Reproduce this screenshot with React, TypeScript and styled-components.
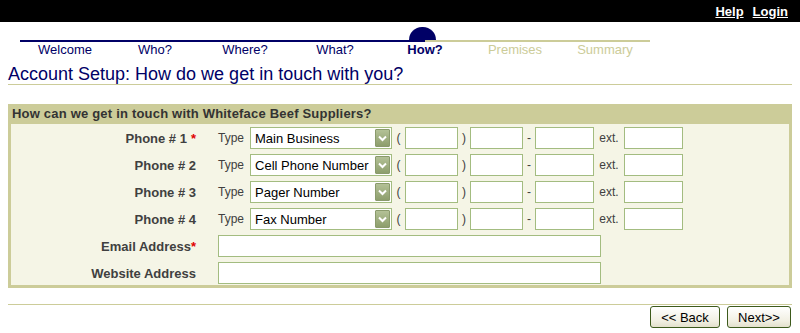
import React from "react";
import styled, { createGlobalStyle } from "styled-components";

const navy = "#000066";
const khaki = "#cccc99";
const ink = "#404040";
const fieldBorder = "#a3bc80";

const GlobalStyle = createGlobalStyle`
  body {
    margin: 0;
    background: #ffffff;
    font-family: "Liberation Sans", Arial, sans-serif;
  }
`;

const TopBar = styled.div`
  height: 22px;
  background: #000;
  display: flex;
  justify-content: flex-end;
  align-items: center;
  gap: 9px;
  padding-right: 12px;
`;

const TopLink = styled.a`
  color: #fff;
  font-weight: bold;
  font-size: 13px;
  text-decoration: underline;
  cursor: pointer;
`;

const Steps = styled.div`
  margin: 18px 0 0 20px;
  width: 630px;
`;

const Track = styled.div`
  display: flex;
  height: 2px;
`;

const TrackPart = styled.div<{ $done?: boolean; $w: number }>`
  width: ${(p) => p.$w}px;
  background: ${(p) => (p.$done ? navy : khaki)};
`;

const StepRow = styled.div`
  display: grid;
  grid-template-columns: repeat(7, 90px);
`;

const Step = styled.div<{ $state: "done" | "current" | "todo" }>`
  position: relative;
  text-align: center;
  font-size: 13px;
  line-height: 15px;
  color: ${(p) => (p.$state === "todo" ? khaki : navy)};
  font-weight: ${(p) => (p.$state === "current" ? "bold" : "normal")};

  ${(p) =>
    p.$state === "current" &&
    `
    &::before {
      content: "";
      position: absolute;
      left: 50%;
      top: -15px;
      width: 27px;
      height: 13px;
      margin-left: -16px;
      background: ${navy};
      border-radius: 14px 14px 0 0;
    }
  `}
`;

const Title = styled.h1`
  margin: 7px 8px 0;
  border-bottom: 1px solid ${khaki};
  font-size: 18px;
  font-weight: normal;
  line-height: 20px;
  color: ${navy};
`;

const Panel = styled.div`
  margin: 19px 8px 0;
  border: 3px solid ${khaki};
  border-top: 0;
  background: #f5f5e6;
`;

const PanelHead = styled.div`
  background: ${khaki};
  height: 20px;
  padding-left: 1px;
  font-size: 13px;
  font-weight: bold;
  letter-spacing: 0.2px;
  line-height: 20px;
  color: #333;
`;

const Rows = styled.div`
  display: grid;
  grid-template-columns: 185px 1fr;
  column-gap: 22px;
  row-gap: 5px;
  padding: 3px 0 1px;
`;

const Label = styled.div`
  display: flex;
  align-items: center;
  justify-content: flex-end;
  font-size: 13px;
  font-weight: bold;
  color: ${ink};
  height: 22px;
`;

const Req = styled.span<{ $gap?: boolean }>`
  color: #e00000;
  margin-left: ${(p) => (p.$gap ? 4 : 0)}px;
`;

const Fields = styled.div`
  display: flex;
  align-items: center;
  height: 22px;
`;

const Sep = styled.span<{ $w: number }>`
  width: ${(p) => p.$w}px;
  font-size: 12px;
  color: ${ink};
  text-align: center;
`;

const Word = styled.span`
  font-size: 12px;
  color: ${ink};
  margin-right: 6px;
`;

const TextBox = styled.input<{ $w: number }>`
  box-sizing: border-box;
  width: ${(p) => p.$w}px;
  height: 22px;
  border: 1px solid ${fieldBorder};
  background: #fff;
  padding: 0 3px;
  font: 13px "Liberation Sans", Arial, sans-serif;
  outline: none;
`;

const SelectBox = styled.div`
  box-sizing: border-box;
  width: 142px;
  height: 22px;
  border: 1px solid ${fieldBorder};
  background: #fff;
  display: flex;
  align-items: center;
  justify-content: space-between;
  padding: 0 1px 0 4px;
  font-size: 13px;
  color: #000;
  white-space: nowrap;
`;

const ArrowBox = styled.div`
  box-sizing: border-box;
  width: 15px;
  height: 18px;
  border: 1px solid #8a9a6c;
  border-radius: 1px;
  background: linear-gradient(#b3c196, #8d9e6c);
  display: flex;
  align-items: center;
  justify-content: center;
`;

const Divider = styled.div`
  margin: 16px 8px 0;
  border-top: 1px solid ${khaki};
`;

const Actions = styled.div`
  display: flex;
  justify-content: flex-end;
  gap: 7px;
  margin: 1px 9px 0;
`;

const NavButton = styled.button<{ $w: number }>`
  width: ${(p) => p.$w}px;
  height: 22px;
  border: 1px solid #3d5a1c;
  border-radius: 3px;
  background: linear-gradient(#ffffff, #f1efe2 70%, #e3e0cc);
  font: 13px "Liberation Sans", Arial, sans-serif;
  color: #000;
  padding: 0;
`;

const phones = [
  { n: 1, type: "Main Business", req: true },
  { n: 2, type: "Cell Phone Number" },
  { n: 3, type: "Pager Number" },
  { n: 4, type: "Fax Number" },
];

const steps: { name: string; state: "done" | "current" | "todo" }[] = [
  { name: "Welcome", state: "done" },
  { name: "Who?", state: "done" },
  { name: "Where?", state: "done" },
  { name: "What?", state: "done" },
  { name: "How?", state: "current" },
  { name: "Premises", state: "todo" },
  { name: "Summary", state: "todo" },
];

const Chevron = () => (
  <svg width="9" height="7" viewBox="0 0 9 7">
    <path d="M1 1.5 L4.5 5 L8 1.5" fill="none" stroke="#fff" strokeWidth="2" />
  </svg>
);

const App = () => {
  return (
    <>
      <GlobalStyle />
      <TopBar>
        <TopLink>Help</TopLink>
        <TopLink>Login</TopLink>
      </TopBar>

      <Steps>
        <Track>
          <TrackPart $done $w={405} />
          <TrackPart $w={225} />
        </Track>
        <StepRow>
          {steps.map((s) => (
            <Step key={s.name} $state={s.state}>
              {s.name}
            </Step>
          ))}
        </StepRow>
      </Steps>

      <Title>Account Setup: How do we get in touch with you?</Title>

      <Panel>
        <PanelHead>How can we get in touch with Whiteface Beef Suppliers?</PanelHead>
        <Rows>
          {phones.map((p) => (
            <React.Fragment key={p.n}>
              <Label>
                Phone # {p.n}
                {p.req && <Req $gap>*</Req>}
              </Label>
              <Fields>
                <Word>Type</Word>
                <SelectBox>
                  {p.type}
                  <ArrowBox>
                    <Chevron />
                  </ArrowBox>
                </SelectBox>
                <Sep $w={13}>(</Sep>
                <TextBox $w={53} />
                <Sep $w={12}>)</Sep>
                <TextBox $w={53} />
                <Sep $w={12}>-</Sep>
                <TextBox $w={59} />
                <Sep $w={30}>ext.</Sep>
                <TextBox $w={59} />
              </Fields>
            </React.Fragment>
          ))}
          <Label>
            Email Address<Req>*</Req>
          </Label>
          <Fields>
            <TextBox $w={383} />
          </Fields>
          <Label>Website Address</Label>
          <Fields>
            <TextBox $w={383} />
          </Fields>
        </Rows>
      </Panel>

      <Divider />
      <Actions>
        <NavButton $w={70}>&lt;&lt; Back</NavButton>
        <NavButton $w={64}>Next&gt;&gt;</NavButton>
      </Actions>
    </>
  );
};

export default App;
